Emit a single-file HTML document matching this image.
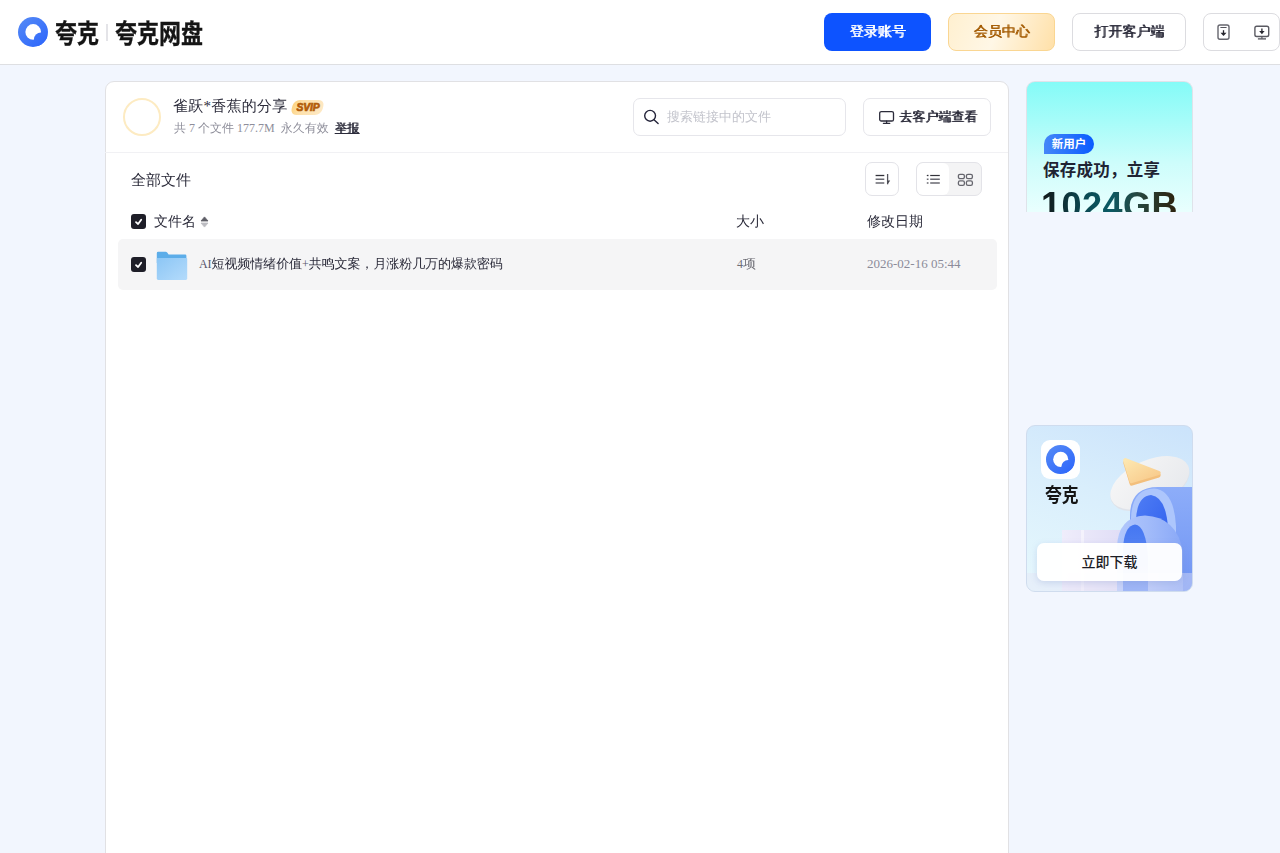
<!DOCTYPE html>
<html lang="zh-CN">
<head>
<meta charset="utf-8">
<title>夸克网盘分享</title>
<style>
*{box-sizing:border-box;margin:0;padding:0}
html,body{width:1280px;height:853px;overflow:hidden}
body{background:#f2f6fe;font-family:"Liberation Serif","WenQuanYi Zen Hei",serif;color:#2b2b3a;position:relative}
.abs{position:absolute}
.hdr{position:absolute;left:0;top:0;width:1280px;height:65px;background:#fff;border-bottom:1px solid #dedfe2}
.logo-t{position:absolute;top:18px;font-family:"Liberation Sans","Noto Sans CJK SC",sans-serif;font-weight:700;font-size:26px;line-height:32px;color:#151515;-webkit-text-stroke:.35px #151515;white-space:nowrap;transform:scaleX(.845);transform-origin:0 0}
.btn{position:absolute;top:13px;height:38px;border-radius:8px;font-size:14px;line-height:36px;text-align:center;white-space:nowrap;text-shadow:1px 0 0 currentColor}
.b{text-shadow:1px 0 0 currentColor}
.cardbg{position:absolute;left:105px;top:81px;width:904px;height:790px;background:#fff;border:1px solid #e1e1e4;border-radius:9px}
.card{position:absolute;left:105px;top:82px;width:903px;height:780px}
.t{position:absolute;white-space:nowrap}
.cb{width:15px;height:15px;border-radius:3px;background:#1e1e28}
.cb svg{position:absolute;left:0;top:0}
</style>
</head>
<body>
<div class="hdr">
  <svg class="abs" style="left:18px;top:17px" width="30" height="30" viewBox="0 0 30 30">
    <defs><linearGradient id="lg" gradientUnits="userSpaceOnUse" x1="4" y1="2" x2="26" y2="28"><stop offset="0" stop-color="#5287f6"/><stop offset="1" stop-color="#2f68fb"/></linearGradient>
    <clipPath id="lc"><circle cx="15" cy="15" r="15"/></clipPath></defs>
    <g clip-path="url(#lc)"><rect width="30" height="30" fill="url(#lg)"/><circle cx="15.2" cy="14.9" r="7.8" fill="#fff"/><circle cx="23" cy="22.5" r="7.1" fill="url(#lg)"/></g>
  </svg>
  <div class="logo-t" style="left:55px">夸克</div>
  <div class="abs" style="left:106px;top:24px;width:2px;height:17px;background:#e4e4e8"></div>
  <div class="logo-t" style="left:115px">夸克网盘</div>

  <div class="btn" style="left:824px;width:107px;background:#0d53ff;color:#fff;line-height:38px">登录账号</div>
  <div class="btn" style="left:948px;width:107px;background:linear-gradient(110deg,#fff0d0 0%,#fff7e6 45%,#ffe0a8 100%);border:1px solid #fad692;color:#a35a00">会员中心</div>
  <div class="btn" style="left:1072px;width:114px;background:#fff;border:1px solid #dcdce0;color:#2b2b3a">打开客户端</div>
  <div class="btn" style="left:1203px;width:77px;background:#fff;border:1px solid #dcdce0"></div>
  <svg class="abs" style="left:1216px;top:23px" width="15" height="18" viewBox="0 0 15 18" fill="none">
    <rect x="2" y="2" width="11" height="14.2" rx="2" stroke="#66666e" stroke-width="1.4"/>
    <path d="M4.4 4.5h6.2" stroke="#55555d" stroke-width="1"/>
    <path d="M7.5 7.2v3" stroke="#26262e" stroke-width="1.3"/>
    <path d="M4.5 9.7h6L7.5 13z" fill="#26262e"/>
  </svg>
  <svg class="abs" style="left:1253px;top:24px" width="18" height="17" viewBox="0 0 18 17" fill="none">
    <rect x="1.9" y="2.3" width="13.8" height="10.2" rx="1.8" stroke="#5a5a62" stroke-width="1.4"/>
    <path d="M8.9 12.6v2" stroke="#5a5a62" stroke-width="1.2"/>
    <path d="M4.9 14.9h8.1" stroke="#44444c" stroke-width="1.2"/>
    <path d="M8.9 4.5v3" stroke="#26262e" stroke-width="1.3"/>
    <path d="M6.2 7.1h5.4L8.9 10.2z" fill="#26262e"/>
  </svg>
</div>

<div class="cardbg"></div>
<div class="card">
  <div class="abs" style="left:18px;top:16px;width:38px;height:38px;border-radius:50%;border:2px solid #fdebc2;background:#fff"></div>
  <div class="t" style="left:68px;top:14px;font-size:15px;letter-spacing:.25px;line-height:20px;color:#2b2b3a">雀跃*香蕉的分享</div>
  <div class="abs" style="left:187px;top:18px;width:31px;height:15px;border-radius:6px;background:linear-gradient(100deg,#fdd27e 0%,#fde0aa 30%,#fee9c4 100%);transform:skewX(-14deg)"></div>
  <div class="t" style="left:186.5px;top:18px;width:33px;height:15px;font-family:'Liberation Sans',sans-serif;font-weight:bold;font-style:italic;font-size:10.3px;line-height:15px;color:#b25c0a;-webkit-text-stroke:0.7px #b25c0a;text-align:center;letter-spacing:-0.1px">SVIP</div>
  <div class="t" style="left:69px;top:39px;font-size:12px;line-height:14px;color:#8e8e9a">共 7 个文件 177.7M&nbsp; 永久有效 &nbsp;<span class="b" style="color:#2b2b3a;text-decoration:underline">举报</span></div>
  <div class="abs" style="left:0;top:70px;width:903px;height:1px;background:#f1f1f4"></div>

  <div class="abs" style="left:528px;top:16px;width:213px;height:38px;border:1px solid #e6e6eb;border-radius:7px;background:#fff"></div>
  <svg class="abs" style="left:538px;top:26px" width="18" height="18" viewBox="0 0 18 18" fill="none" stroke="#24243a" stroke-width="1.4"><circle cx="7.1" cy="7.8" r="5.4"/><path d="M11 11.7l4.1 3.8" stroke-linecap="round"/></svg>
  <div class="t" style="left:562px;top:26px;font-size:13px;line-height:18px;color:#c3c4cc">搜索链接中的文件</div>

  <div class="abs" style="left:758px;top:16px;width:128px;height:38px;border:1px solid #e6e6eb;border-radius:7px;background:#fff"></div>
  <svg class="abs" style="left:773px;top:28px" width="17" height="16" viewBox="0 0 17 16" fill="none" stroke="#2b2b3a" stroke-width="1.3"><rect x="1.7" y="1.6" width="13.8" height="9.4" rx="1.6"/><path d="M5.4 13.3h6.4M8.6 11.2v2" stroke-linecap="round"/></svg>
  <div class="t b" style="left:794px;top:26px;font-size:13px;line-height:18px;color:#2b2b3a">去客户端查看</div>

  <div class="t" style="left:26px;top:88px;font-size:15px;line-height:20px;color:#2b2b3a">全部文件</div>

  <div class="abs" style="left:760px;top:80px;width:34px;height:34px;border:1px solid #e3e3e8;border-radius:7px;background:#fff"></div>
  <svg class="abs" style="left:769px;top:90px" width="18" height="14" viewBox="0 0 18 14" fill="none">
    <path d="M1.6 3.5h8.7" stroke="#33333b" stroke-width="1.3"/><path d="M1.6 7.3h8.7M1.6 10.9h8.7" stroke="#6a6a72" stroke-width="1.5"/>
    <path d="M13.6 2v10.3" stroke="#55555d" stroke-width="1.3"/><path d="M13.6 8.4h2.6l-2.6 3.9z" fill="#44444c"/>
  </svg>
  <div class="abs" style="left:811px;top:80px;width:66px;height:34px;border:1px solid #e3e3e8;border-radius:7px;background:#f4f4f5;overflow:hidden"><div style="width:32px;height:32px;background:#fff;border-radius:6px"></div></div>
  <svg class="abs" style="left:820px;top:90px" width="16" height="14" viewBox="0 0 16 14" fill="none">
    <path d="M1.8 3.5h1.7" stroke="#33333b" stroke-width="1.3"/><path d="M5.2 3.5h9.6" stroke="#33333b" stroke-width="1.2"/>
    <path d="M1.8 7.3h1.7M5.2 7.3h9.6M1.8 10.9h1.7M5.2 10.9h9.6" stroke="#6a6a72" stroke-width="1.5"/>
  </svg>
  <svg class="abs" style="left:852px;top:91px" width="17" height="14" viewBox="0 0 17 14" fill="none" stroke="#66666e" stroke-width="1.3">
    <rect x="1.4" y="1.3" width="6" height="4.4" rx="1.6"/><rect x="9.4" y="1.3" width="6" height="4.4" rx="1.6"/>
    <rect x="1.4" y="7.9" width="6" height="4.4" rx="1.6"/><rect x="9.4" y="7.9" width="6" height="4.4" rx="1.6"/>
  </svg>

  <div class="abs cb" style="left:26px;top:132px"><svg width="15" height="15" viewBox="0 0 15 15" fill="none" stroke="#fff" stroke-width="1.8" stroke-linecap="round" stroke-linejoin="round"><path d="M5 8.1l2.1 1.9 3.1-4.3"/></svg></div>
  <div class="t" style="left:49px;top:131px;font-size:14px;line-height:18px;color:#2b2b3a">文件名</div>
  <svg class="abs" style="left:95px;top:134px" width="9" height="12" viewBox="0 0 9 12"><path d="M4.5 .9L8 5H1z" fill="#5e5e66" stroke="#5e5e66" stroke-width=".8" stroke-linejoin="round"/><path d="M4.5 11.1L8 7H1z" fill="#bcbcc2" stroke="#bcbcc2" stroke-width=".8" stroke-linejoin="round"/></svg>
  <div class="t" style="left:631px;top:131px;font-size:14px;line-height:18px;color:#2b2b3a">大小</div>
  <div class="t" style="left:762px;top:131px;font-size:14px;line-height:18px;color:#2b2b3a">修改日期</div>

  <div class="abs" style="left:13px;top:157px;width:879px;height:51px;border-radius:5px;background:#f5f5f6"></div>
  <div class="abs cb" style="left:26px;top:175px"><svg width="15" height="15" viewBox="0 0 15 15" fill="none" stroke="#fff" stroke-width="1.8" stroke-linecap="round" stroke-linejoin="round"><path d="M5 8.1l2.1 1.9 3.1-4.3"/></svg></div>
  <svg class="abs" style="left:51px;top:169px" width="32" height="30" viewBox="0 0 32 30">
    <defs><linearGradient id="fg" x1="0" y1="0" x2="1" y2="1"><stop offset="0" stop-color="#8cc6f5"/><stop offset="1" stop-color="#b4dbfb"/></linearGradient></defs>
    <path d="M.8 2.2Q.8 .8 2.2 .8H9.6Q10.6 .8 11.4 1.8L12.6 3.6H29.2Q30.4 3.6 30.4 4.8V12H.8z" fill="#5cade9"/>
    <path d="M.8 7H30.6Q31.2 7 31.2 7.8V27.6Q31.2 29 29.8 29H2.2Q.8 29 .8 27.6z" fill="url(#fg)"/>
  </svg>
  <div class="t" style="left:94px;top:173px;font-size:13px;line-height:18px;color:#2b2b3a;letter-spacing:-0.07px"><span style="font-size:12px;color:#55556a">AI</span>短视频情绪价值<span style="font-size:12px;color:#55556a">+</span>共鸣文案，月涨粉几万的爆款密码</div>
  <div class="t" style="left:632px;top:173px;font-size:13px;line-height:18px;color:#6e6e76"><span style="font-size:12px">4</span>项</div>
  <div class="t" style="left:762px;top:173px;font-size:13px;line-height:18px;color:#8b8b99">2026-02-16 05:44</div>
</div>

<!-- ad 1 -->
<div class="abs" style="left:1026px;top:81px;width:167px;height:131px;border-radius:9px 9px 0 0;border:1px solid #dfe3ea;border-bottom:none;overflow:hidden;background:linear-gradient(180deg,#84fbf7 0%,#a6fcf9 30%,#cdfdfb 62%,#e9fffe 100%);font-family:'Liberation Sans','Noto Sans CJK SC',sans-serif">
  <div class="abs" style="left:17px;top:52px;width:50px;height:20px;border-radius:10px 10px 10px 0;background:linear-gradient(90deg,#4487f8,#0a5cff)"></div>
  <div class="t" style="left:17px;top:52px;width:50px;height:20px;line-height:20px;text-align:center;font-size:11.5px;font-weight:bold;color:#fff">新用户</div>
  <div class="t" style="left:16px;top:76px;font-size:16.5px;line-height:24px;font-weight:700;color:#1f2433;letter-spacing:0.25px">保存成功，立享</div>
  <div class="t" style="left:14px;top:104px;font-size:36px;line-height:40px;font-weight:bold;letter-spacing:0.5px;background:linear-gradient(90deg,#121616 0%,#0b4750 30%,#0a5a64 50%,#27463d 72%,#2d200c 100%);-webkit-background-clip:text;background-clip:text;color:transparent">1024GB</div>
</div>

<!-- ad 2 -->
<div class="abs" style="left:1026px;top:425px;width:167px;height:167px;border-radius:9px;border:1px solid #cfdcee;overflow:hidden;background:linear-gradient(200deg,#cbe3fb 0%,#d9eefc 45%,#e6f8fd 100%);font-family:'Liberation Sans','Noto Sans CJK SC',sans-serif">
  <svg class="abs" style="left:0;top:0" width="165" height="165" viewBox="0 0 165 165">
    <defs>
      <linearGradient id="a1" x1="0" y1="0" x2="1" y2="1"><stop offset="0" stop-color="#fde7b0"/><stop offset="1" stop-color="#f8c888"/></linearGradient>
      <linearGradient id="a2" x1="0" y1="0" x2="0" y2="1"><stop offset="0" stop-color="#8dadf9"/><stop offset="1" stop-color="#6f94f3"/></linearGradient>
      <linearGradient id="a3" x1="0" y1="0" x2="1" y2="1"><stop offset="0" stop-color="#4f7df4"/><stop offset="1" stop-color="#2f5fee"/></linearGradient>
      <linearGradient id="a4" x1="0" y1="0" x2="1" y2="0"><stop offset="0" stop-color="#efedfb"/><stop offset="1" stop-color="#e0ddf6"/></linearGradient>
      <linearGradient id="a6" x1="0" y1="0" x2="1" y2="0"><stop offset="0" stop-color="#b2c8fc"/><stop offset=".45" stop-color="#a3bcfa"/><stop offset="1" stop-color="#89a8f7"/></linearGradient>
      <linearGradient id="a7" x1="0" y1="0" x2="0" y2="1"><stop offset="0" stop-color="#4577f2"/><stop offset="1" stop-color="#6c95f6"/></linearGradient>
      <linearGradient id="a5" x1="0" y1="0" x2="1" y2="1"><stop offset="0" stop-color="#f7f7f7"/><stop offset="1" stop-color="#e6e8ec"/></linearGradient>
    </defs>
    <rect x="35" y="104" width="62" height="70" fill="url(#a4)"/>
    <rect x="54" y="104" width="3" height="70" fill="#f4f2fc"/>
    <ellipse cx="123" cy="58.5" rx="42" ry="22.5" transform="rotate(-24 123 58.5)" fill="#dfe3ea"/>
    <ellipse cx="122.8" cy="56.8" rx="42" ry="22.5" transform="rotate(-24 122.8 56.8)" fill="url(#a5)"/>
    <path d="M98.5 36.5L131.5 49.3 104.8 57.5z" fill="#f3bf7c" stroke="#f3bf7c" stroke-width="4.4" stroke-linejoin="round"/>
    <path d="M98.3 34.3L131.5 47 104.6 55z" fill="url(#a1)" stroke="url(#a1)" stroke-width="4.4" stroke-linejoin="round"/>
    <path d="M103 165V90Q103 61 131 61H170V165z" fill="url(#a2)"/>
    <path d="M104 122V92Q105 63 127 62.500Q147 64 149 100V122z" fill="#adc6fc"/>
    <path d="M109 122V94Q110 70 124 69Q139 71 141 102V122z" fill="url(#a3)"/>
    <path d="M90 165V121Q91 91 118 89.500Q150 91 156 126V165z" fill="url(#a6)"/>
    <path d="M96 165V123Q97 100 108 98.500Q119 100 121 131V165z" fill="url(#a7)"/>
    <rect x="0" y="147" width="165" height="19" fill="#e6e4f6" opacity=".42"/>
  </svg>
  <div class="abs" style="left:14px;top:14px;width:39px;height:39px;border-radius:9px;background:#fff"></div>
  <svg class="abs" style="left:19px;top:19px" width="29" height="29" viewBox="0 0 30 30">
    <g clip-path="url(#lc)"><rect width="30" height="30" fill="url(#lg)"/><circle cx="15.2" cy="14.9" r="7.8" fill="#fff"/><circle cx="23" cy="22.5" r="7.1" fill="url(#lg)"/></g>
  </svg>
  <div class="t" style="left:18px;top:56px;font-size:19.5px;line-height:26px;font-weight:bold;color:#151515;transform:scaleX(.86);transform-origin:0 0">夸克</div>
  <div class="abs" style="left:10px;top:117px;width:145px;height:38px;border-radius:7px;background:rgba(255,255,255,.96);box-shadow:0 2px 6px rgba(120,140,200,.25)"></div>
  <div class="t" style="left:10px;top:117px;width:145px;height:38px;line-height:39px;text-align:center;font-size:14px;font-weight:500;color:#1d1d26">立即下载</div>
</div>
</body>
</html>
